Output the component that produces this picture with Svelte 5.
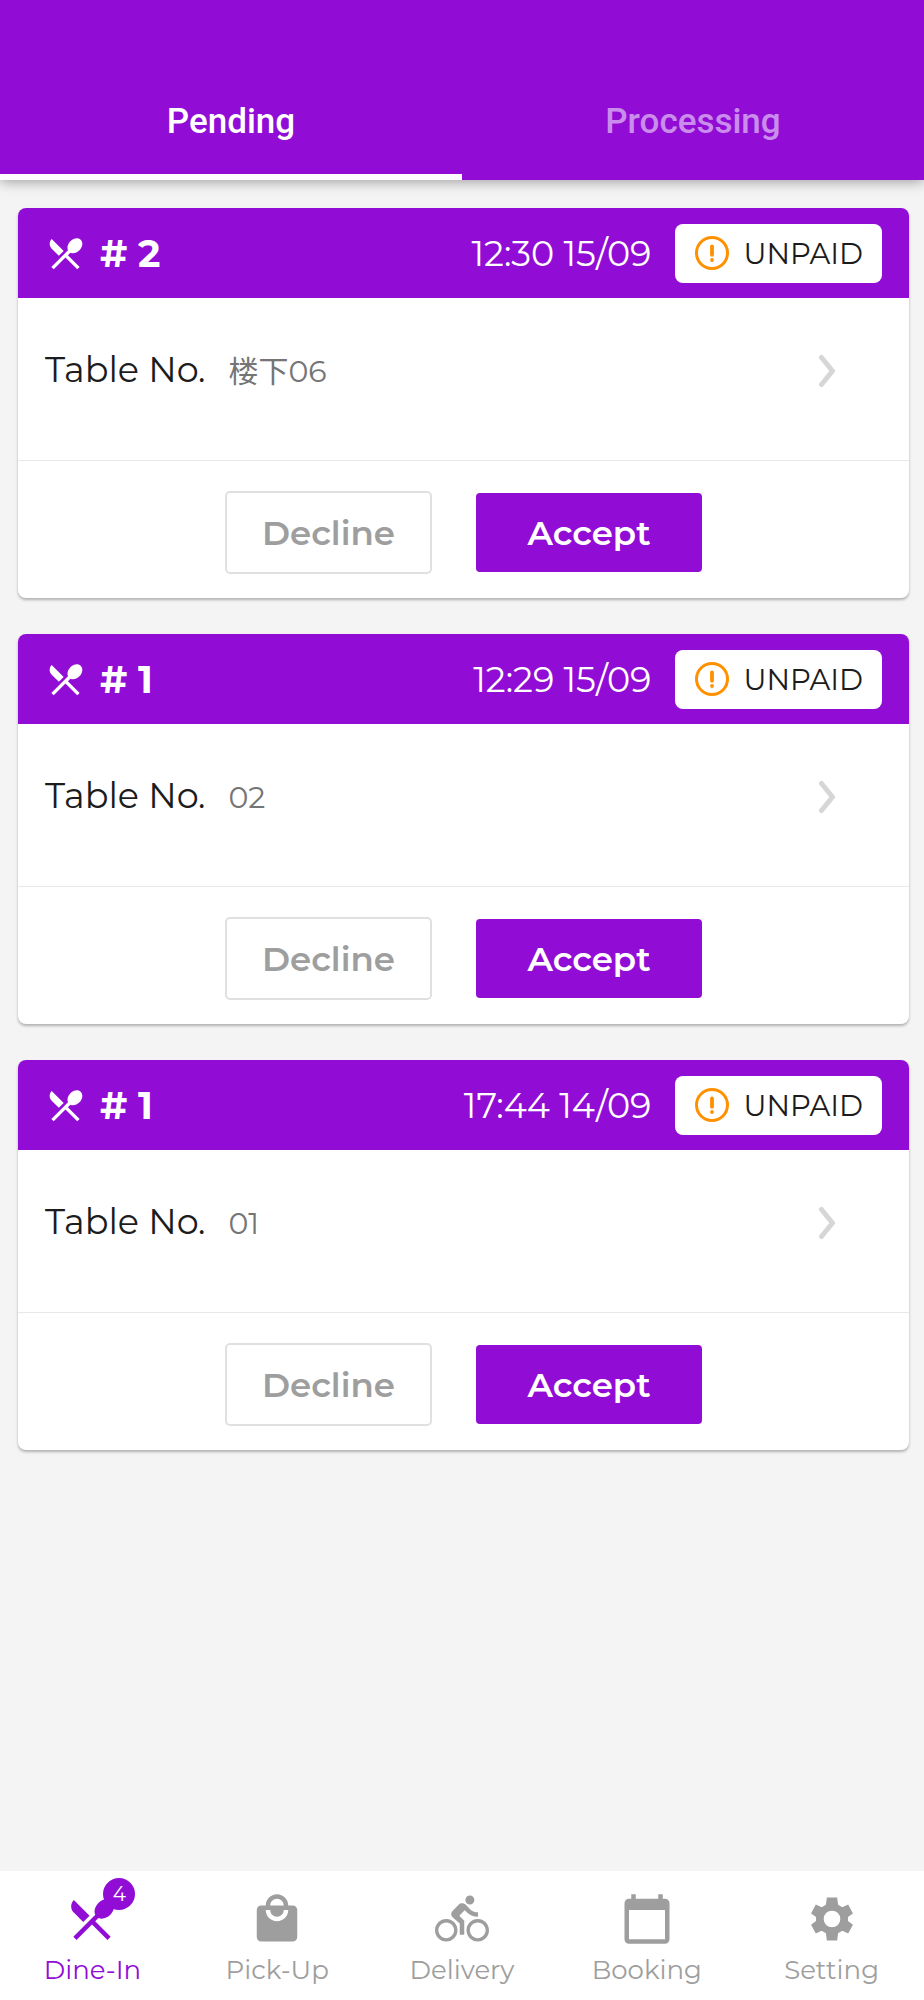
<script>
  const orders = [
    { id: 'a', number: 2, time: '12:30 15/09', table: '楼下06' },
    { id: 'b', number: 1, time: '12:29 15/09', table: '02' },
    { id: 'c', number: 1, time: '17:44 14/09', table: '01' }
  ];

  const diningPath =
    'M8.1 13.34l2.83-2.83L3.91 3.5c-1.56 1.56-1.56 4.09 0 5.66l4.19 4.18zm6.78-1.81c1.53.71 3.68.21 5.27-1.38 1.91-1.91 2.28-4.65.81-6.12-1.46-1.46-4.2-1.1-6.12.81-1.59 1.59-2.09 3.74-1.38 5.27L3.7 19.87l1.41 1.41L12 14.41l6.88 6.88 1.41-1.41L13.41 13l1.47-1.47z';

  const navItems = [
    { label: 'Dine-In', badge: 4, path: diningPath },
    {
      label: 'Pick-Up',
      path: 'M19 6h-2c0-2.76-2.24-5-5-5S7 3.24 7 6H5c-1.1 0-1.99.9-1.99 2L3 20c0 1.1.9 2 2 2h14c1.1 0 2-.9 2-2V8c0-1.1-.9-2-2-2zm-7-3c1.66 0 3 1.34 3 3H9c0-1.66 1.34-3 3-3zm0 10c-2.76 0-5-2.24-5-5h2c0 1.66 1.34 3 3 3s3-1.34 3-3h2c0 2.76-2.24 5-5 5z'
    },
    {
      label: 'Delivery',
      path: 'M15.5 5.5c1.1 0 2-.9 2-2s-.9-2-2-2-2 .9-2 2 .9 2 2 2zM5 12c-2.8 0-5 2.2-5 5s2.2 5 5 5 5-2.2 5-5-2.2-5-5-5zm0 8.5c-1.9 0-3.5-1.6-3.5-3.5s1.6-3.5 3.5-3.5 3.5 1.6 3.5 3.5-1.6 3.5-3.5 3.5zm5.8-10l2.4-2.4.8.8c1.3 1.3 3 2.1 5.1 2.1V9c-1.5 0-2.7-.6-3.6-1.5l-1.9-1.9c-.5-.4-1-.6-1.6-.6s-1.1.2-1.4.6L7.8 8.4c-.4.4-.6.9-.6 1.4 0 .6.2 1.1.6 1.4L11 14v5h2v-6.2l-2.2-2.3zM19 12c-2.8 0-5 2.2-5 5s2.2 5 5 5 5-2.2 5-5-2.2-5-5-5zm0 8.5c-1.9 0-3.5-1.6-3.5-3.5s1.6-3.5 3.5-3.5 3.5 1.6 3.5 3.5-1.6 3.5-3.5 3.5z'
    },
    {
      label: 'Booking',
      path: 'M20 3h-1V1h-2v2H7V1H5v2H4c-1.1 0-2 .9-2 2v16c0 1.1.9 2 2 2h16c1.1 0 2-.9 2-2V5c0-1.1-.9-2-2-2zm0 18H4V8h16v13z'
    },
    {
      label: 'Setting',
      path: 'M9.7 2.45L14.3 2.45L14.7 5.7L16.6 6.75L19.2 5.6L21.3 9.5L19.1 11.1L19.1 12.9L21.3 14.5L19.2 18.4L16.6 17.25L14.7 18.3L14.3 21.55L9.7 21.55L9.3 18.3L7.4 17.25L4.8 18.4L2.7 14.5L4.9 12.9L4.9 11.1L2.7 9.5L4.8 5.6L7.4 6.75L9.3 5.7zM12 8.3a3.7 3.7 0 1 0 0 7.4 3.7 3.7 0 0 0 0-7.4z'
    }
  ];

  let activeTab = $state('Pending');
  let activeNav = $state('Dine-In');
</script>

<div class="page">
  <header class="top">
    <div class="tabs" role="tablist">
      {#each ['Pending', 'Processing'] as tab}
        <button
          type="button"
          role="tab"
          class="tab"
          class:active={activeTab === tab}
          aria-selected={activeTab === tab}
          onclick={() => (activeTab = tab)}>{tab}</button>
      {/each}
    </div>
  </header>

  <main class="orders">
    {#each orders as order (order.id)}
      <article class="card">
        <div class="card-head">
          <svg class="dining" viewBox="0 0 24 24" aria-hidden="true"><path d={diningPath} /></svg>
          <h2># {order.number}</h2>
          <time>{order.time}</time>
          <span class="status">
            <svg class="alert" viewBox="0 0 34 34" aria-hidden="true">
              <circle cx="17" cy="17" r="15.5" fill="none" stroke="currentColor" stroke-width="3" />
              <path d="M17 10.4v8.4" stroke="currentColor" stroke-width="3.8" stroke-linecap="round" />
              <circle cx="17" cy="24" r="1.9" fill="currentColor" />
            </svg>
            UNPAID
          </span>
        </div>
        <a class="details" href="#order-{order.id}">
          <span class="label">Table No.</span>
          <span class="value">{order.table}</span>
          <svg class="chevron" viewBox="0 0 18 34" aria-hidden="true">
            <path d="M3.5 3.5L14.5 17L3.5 30.5" />
          </svg>
        </a>
        <div class="actions">
          <button type="button" class="decline">Decline</button>
          <button type="button" class="accept">Accept</button>
        </div>
      </article>
    {/each}
  </main>

  <nav class="bottom">
    {#each navItems as item}
      <button
        type="button"
        class="nav-item"
        class:active={activeNav === item.label}
        onclick={() => (activeNav = item.label)}>
        <span class="nav-icon">
          <svg viewBox="0 0 24 24" aria-hidden="true"><path d={item.path} /></svg>
          {#if item.badge}<span class="badge">{item.badge}</span>{/if}
        </span>
        <span class="nav-label">{item.label}</span>
      </button>
    {/each}
  </nav>
</div>

<style>
  :global(body) {
    margin: 0;
    background: #f4f4f4;
  }

  .page {
    --purple: #910dd6;
    --grey: #9e9e9e;
    display: flex;
    flex-direction: column;
    min-height: 100vh;
    font-family: Montserrat, Inter, 'Noto Sans CJK SC', sans-serif;
    color: #1c1c1c;
  }

  button {
    margin: 0;
    padding: 0;
    border: 0;
    background: none;
    font: inherit;
    color: inherit;
    cursor: pointer;
  }

  .top {
    padding-top: 62px;
    background: var(--purple);
    box-shadow: 0 2px 12px rgba(0, 0, 0, 0.35);
  }

  .tabs {
    display: grid;
    grid-template-columns: 1fr 1fr;
  }

  .tab {
    height: 118px;
    border-top: 6px solid transparent;
    border-bottom: 6px solid transparent;
    font-family: Roboto, sans-serif;
    font-size: 35px;
    font-weight: 500;
    color: rgba(255, 255, 255, 0.54);
  }

  .tab.active {
    color: #fff;
    border-bottom-color: #fff;
  }

  .orders {
    flex: 1;
    display: flex;
    flex-direction: column;
    gap: 36px;
    padding: 28px 15px 36px 18px;
  }

  .card {
    border-radius: 8px;
    background: #fff;
    box-shadow: 0 2px 3px rgba(0, 0, 0, 0.28);
    overflow: hidden;
  }

  .card-head {
    display: flex;
    align-items: center;
    height: 90px;
    padding: 0 27px;
    background: var(--purple);
    color: #fff;
  }

  .dining {
    width: 41px;
    height: 41px;
    margin-right: 14px;
    fill: currentColor;
  }

  h2 {
    margin: 0;
    font-size: 38px;
    font-weight: 700;
  }

  time {
    margin-left: auto;
    font-size: 35px;
  }

  .status {
    display: flex;
    align-items: center;
    gap: 14px;
    box-sizing: border-box;
    height: 59px;
    margin-left: 24px;
    padding: 0 19px 0 20px;
    border-radius: 8px;
    background: #fff;
    color: #1c1c1c;
    font-size: 29px;
  }

  .alert {
    width: 34px;
    height: 34px;
    color: #ff9100;
  }

  .details {
    display: flex;
    align-items: baseline;
    padding: 42px 73px 58px 27px;
    border-bottom: 1px solid #e8e8e8;
    color: inherit;
    text-decoration: none;
    line-height: 60px;
  }

  .label {
    font-size: 35px;
    margin-right: 23px;
  }

  .value {
    font-size: 30px;
    color: #757575;
  }

  .chevron {
    align-self: center;
    width: 18px;
    height: 34px;
    margin-left: auto;
    fill: none;
    stroke: #d6d6d6;
    stroke-width: 5;
    stroke-linecap: round;
    stroke-linejoin: round;
  }

  .actions {
    display: flex;
    align-items: center;
    justify-content: center;
    gap: 44px;
    padding: 30px 0 24px;
    font-size: 34px;
    font-weight: 600;
  }

  .decline {
    box-sizing: border-box;
    width: 207px;
    height: 83px;
    border: 2px solid #e0e0e0;
    border-radius: 5px;
    color: var(--grey);
  }

  .accept {
    width: 226px;
    height: 79px;
    border-radius: 4px;
    background: var(--purple);
    color: #fff;
  }

  .bottom {
    position: sticky;
    bottom: 0;
    display: grid;
    grid-template-columns: repeat(5, 1fr);
    background: #fff;
  }

  .nav-item {
    display: flex;
    flex-direction: column;
    align-items: center;
    gap: 7px;
    padding: 21px 0 12px;
    color: var(--grey);
  }

  .nav-item.active {
    color: var(--purple);
  }

  .nav-icon {
    position: relative;
    width: 54px;
    height: 54px;
  }

  .nav-icon svg {
    display: block;
    width: 100%;
    height: 100%;
    fill: currentColor;
  }

  .badge {
    position: absolute;
    top: -14px;
    right: -16px;
    width: 32px;
    height: 32px;
    border-radius: 50%;
    background: var(--purple);
    color: #fff;
    font-size: 20px;
    line-height: 32px;
    text-align: center;
  }

  .nav-label {
    font-size: 26px;
    line-height: 35px;
  }
</style>
